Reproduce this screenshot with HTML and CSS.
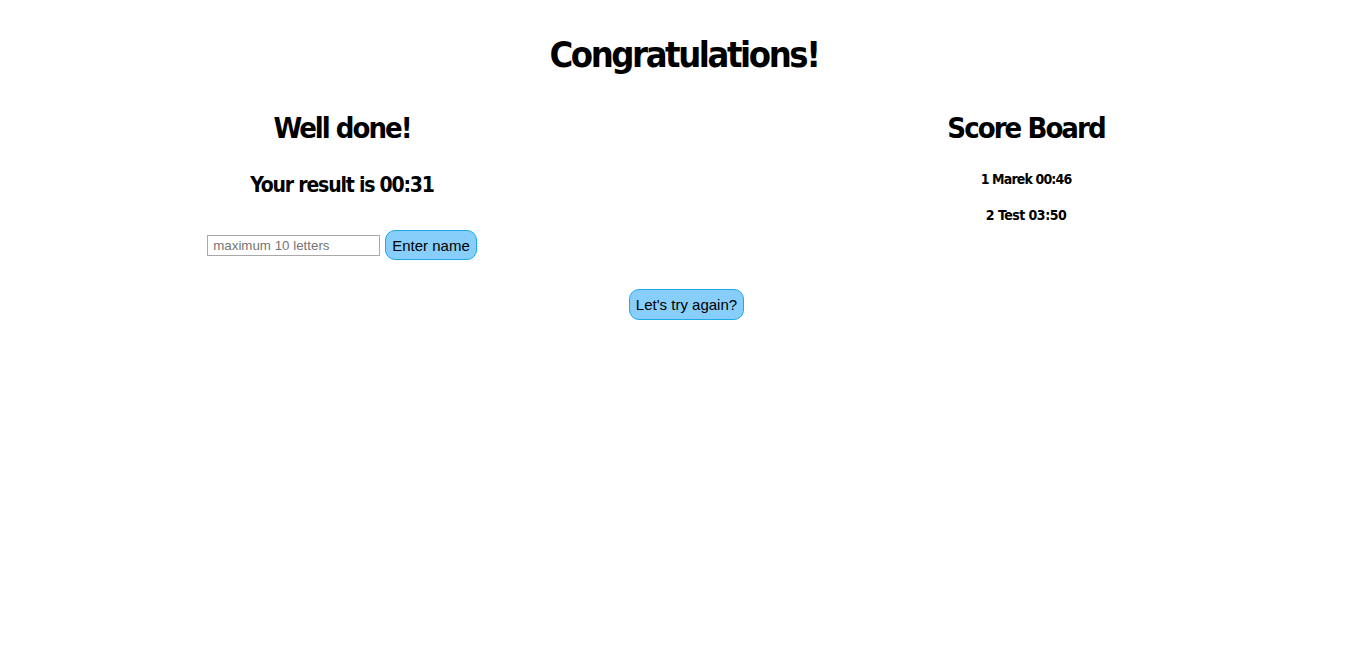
FILE: index.html
```html
<!DOCTYPE html>
<html>
<head>
<meta charset="utf-8">
<link rel="stylesheet" href="styles.css">
</head>
<body>
<h1 class="title">Congratulations!</h1>
<div class="columns">
  <section class="col">
    <h2 class="heading heading-left">Well done!</h2>
    <p class="result">Your result is 00:31</p>
    <form class="name-form">
      <input class="name-input" type="text" placeholder="maximum 10 letters">
      <button class="btn" type="button">Enter name</button>
    </form>
  </section>
  <section class="col">
    <h2 class="heading heading-right">Score Board</h2>
    <p class="score">1 Marek 00:46</p>
    <p class="score score-second">2 Test 03:50</p>
  </section>
</div>
<div class="again">
  <button class="btn" type="button">Let's try again?</button>
</div>
</body>
</html>
```

FILE: styles.css
```css
body {
  margin: 0;
  font-family: "DejaVu Sans Condensed", "DejaVu Sans", sans-serif;
  font-weight: bold;
  color: #000;
  background: #fff;
}
.title {
  margin: 30px 0 0;
  font-size: 36px;
  letter-spacing: -2.4px;
  line-height: 50px;
  text-align: center;
}
.columns {
  display: flex;
}
.col {
  width: 50%;
  display: flex;
  flex-direction: column;
  align-items: center;
}
.heading {
  margin: 28px 0 0;
  font-size: 29px;
  line-height: 40px;
}
.heading-left {
  letter-spacing: -2px;
}
.heading-right {
  letter-spacing: -1.95px;
}
.result {
  margin: 22px 0 0;
  font-size: 21px;
  letter-spacing: -1.2px;
  line-height: 30px;
}
.score {
  margin: 21px 0 0;
  font-size: 14px;
  letter-spacing: -0.85px;
  line-height: 20px;
}
.score-second {
  margin-top: 16px;
  letter-spacing: -0.5px;
}
.name-form {
  margin: 30px 0 0;
  display: flex;
  align-items: center;
  gap: 5px;
}
.name-input {
  box-sizing: border-box;
  width: 173px;
  height: 21px;
  padding: 1px 5px;
  border: 1px solid #a9a9a9;
  font-family: "Liberation Sans", Arial, sans-serif;
  font-weight: normal;
  font-size: 13.33px;
}
.btn {
  height: 30px;
  padding: 0 6px;
  border: 1px solid #1ea8ee;
  border-radius: 10px;
  background: #87cefa;
  font-family: "Liberation Sans", Arial, sans-serif;
  font-weight: normal;
  font-size: 15px;
  color: #000;
}
.again {
  margin-top: 29px;
  display: flex;
  justify-content: center;
  padding-left: 5px;
}
.again .btn {
  height: 31px;
}
```
